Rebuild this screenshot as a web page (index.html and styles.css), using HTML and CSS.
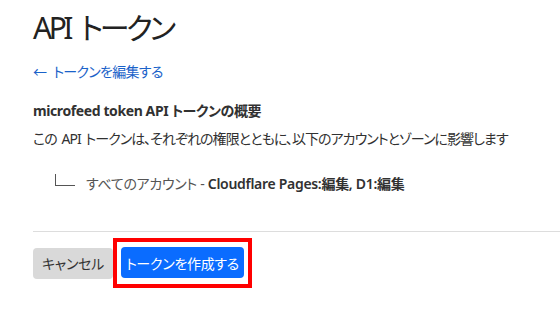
FILE: index.html
```html
<!DOCTYPE html>
<html lang="ja">
<head>
    <meta charset="UTF-8">
    <meta name="viewport" content="width=device-width, initial-scale=1.0">
    <title>API トークン</title>
    <link rel="stylesheet" href="styles.css">
</head>
<body>
    <div class="page">
        <h1 class="title">API トークン</h1>
        <a class="back-link" href="#">← トークンを編集する</a>

        <h2 class="summary-title">microfeed token API トークンの概要</h2>
        <p class="summary-text">この API トークンは、それぞれの権限とともに、以下のアカウントとゾーンに影響します</p>

        <div class="scope">
            <span class="scope-line"></span>
            <span class="scope-name">すべてのアカウント - </span>
            <span class="scope-perms">Cloudflare Pages:編集, D1:編集</span>
        </div>

        <hr class="divider">

        <div class="actions">
            <button class="btn btn-cancel">キャンセル</button>
            <div class="highlight">
                <button class="btn btn-primary">トークンを作成する</button>
            </div>
        </div>
    </div>
</body>
</html>
```

FILE: styles.css
```css
body {
    margin: 0;
    background: #fff;
    color: #313131;
    font-family: "Noto Sans", "Noto Sans CJK JP", sans-serif;
    font-feature-settings: "palt";
}
.page {
    padding: 8px 0 0 33px;
}
.title {
    margin: 0;
    font-size: 30px;
    font-weight: 400;
    line-height: 40px;
    letter-spacing: -3.5px;
    word-spacing: 6px;
    color: #222;
}
.back-link {
    display: inline-block;
    margin-top: 14px;
    font-size: 14px;
    line-height: 20px;
    letter-spacing: -0.7px;
    word-spacing: 4px;
    color: #1a62c9;
    text-decoration: none;
}
.summary-title {
    margin: 19px 0 0;
    font-size: 14px;
    font-weight: 700;
    line-height: 20px;
    letter-spacing: -0.4px;
}
.summary-text {
    margin: 8px 0 0;
    font-size: 14px;
    line-height: 20px;
    letter-spacing: -0.95px;
    word-spacing: 2px;
}
.scope {
    display: flex;
    align-items: center;
    margin: 25px 0 0 22px;
    font-size: 14px;
    line-height: 20px;
    letter-spacing: -0.3px;
}
.scope-line {
    width: 19px;
    height: 11px;
    margin: 0 11px 8px 0;
    border-left: 1px solid #555;
    border-bottom: 1px solid #555;
}
.scope-name {
    white-space: pre;
    color: #555;
}
.scope-perms {
    font-weight: 600;
}
.divider {
    margin: 37px 0 0;
    border: 0;
    border-top: 1px solid #ddd;
}
.actions {
    display: flex;
    align-items: center;
    margin-top: 6px;
}
.btn {
    height: 31px;
    padding: 0;
    border: 0;
    border-radius: 4px;
    font-family: inherit;
    font-size: 14px;
    font-feature-settings: "palt";
    letter-spacing: -0.3px;
    white-space: nowrap;
}
.btn-cancel {
    width: 80px;
    background: #d9d9d9;
    color: #333;
}
.highlight {
    padding: 5px 4px 6px;
    border: 4px solid #f00;
}
.btn-primary {
    width: 123px;
    background: #0a6cff;
    color: #fff;
}
```
